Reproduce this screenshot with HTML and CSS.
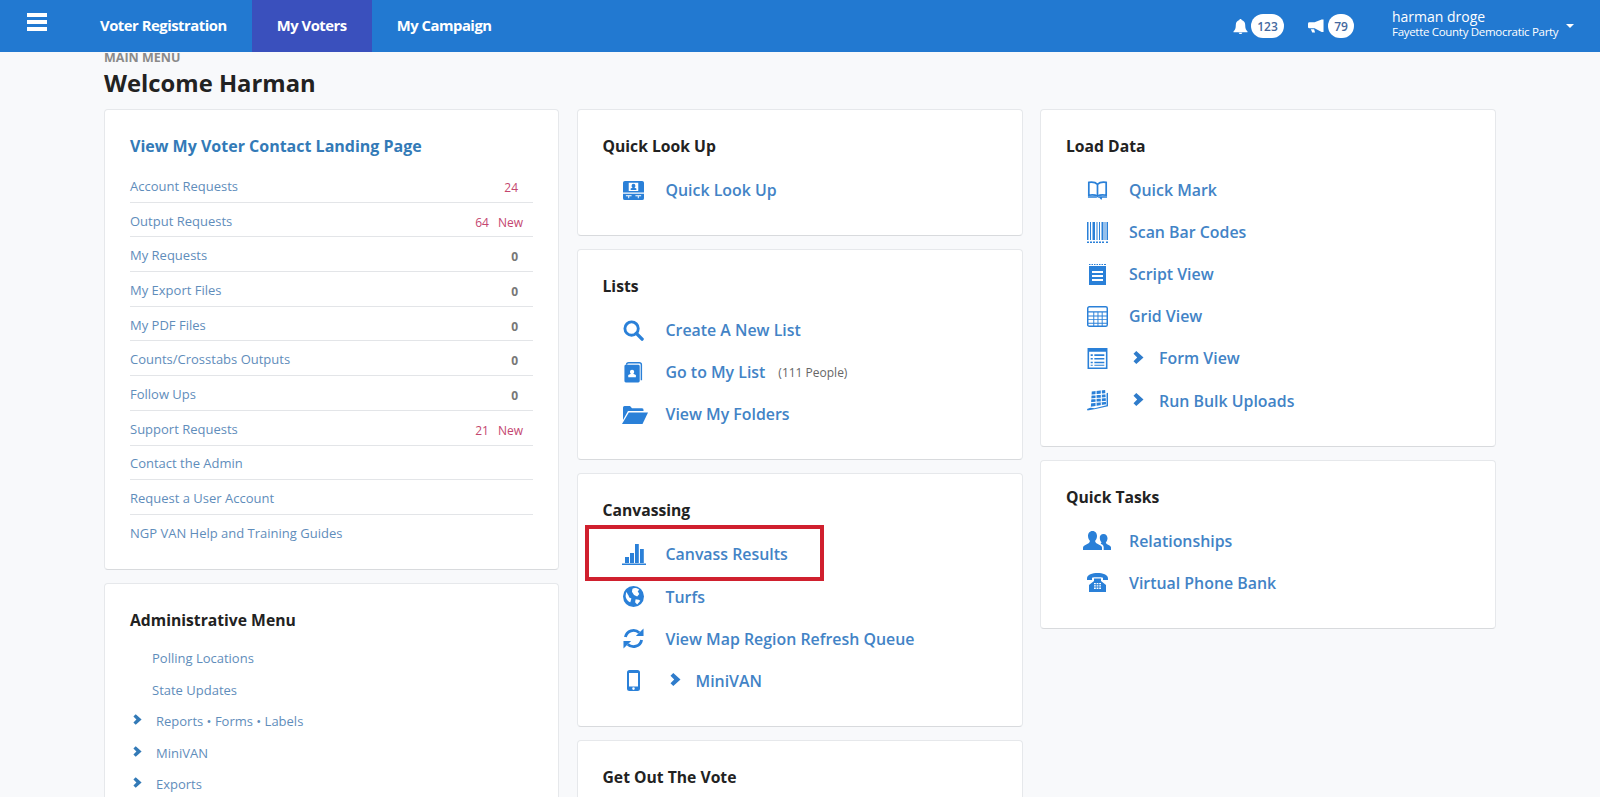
FILE: index.html
```html
<!DOCTYPE html>
<html lang="en">
<head>
<meta charset="utf-8">
<title>Main Menu</title>
<link rel="stylesheet" href="styles.css">
</head>
<body>
<svg class="defs" aria-hidden="true">
  <symbol id="chev" viewBox="0 0 11 13"><path d="M3.300 0 10.500 6.500 3.300 13 .5 10.200 4.200 6.500 .5 2.800Z"/></symbol>
  <symbol id="lookup" viewBox="0 0 22 20"><path fill-rule="evenodd" d="M2 0h18a2 2 0 0 1 2 2v10H0V2a2 2 0 0 1 2-2ZM6 2v8.500h10V2ZM0 13.500h22V18a2 2 0 0 1-2 2H2a2 2 0 0 1-2-2Z"/><path d="M11 3a2 2 0 0 1 2 2c0 1-.5 1.700-1 2l2 1v1.500H8V8l2-1c-.5-.3-1-1-1-2a2 2 0 0 1 2-2Z"/><path fill="#fff" d="M3 15h6v1H6.500v2h-1v-2H3ZM13 15h6v1h-2.500v2h-1v-2H13Z"/></symbol>
  <symbol id="search" viewBox="0 0 22 22"><circle cx="9" cy="9" r="7" fill="none" stroke="currentColor" stroke-width="3"/><path d="M14 14l6 6" fill="none" stroke="currentColor" stroke-width="3.600" stroke-linecap="round"/></symbol>
  <symbol id="mylist" viewBox="0 0 20 22"><path d="M2 3a3 3 0 0 1 3-3h11a3 3 0 0 1 3 3v16h-1.500V3A1.500 1.500 0 0 0 16 1.500H5A1.500 1.500 0 0 0 3.500 3Z"/><path fill-rule="evenodd" d="M2 3h13a1.500 1.500 0 0 1 1.500 1.500V20a1.500 1.500 0 0 1-1.500 1.500H2a1.500 1.500 0 0 1-1.500-1.500V4.500A1.500 1.500 0 0 1 2 3Z"/><path fill="#fff" d="M8.500 8a2.200 2.200 0 0 1 2.200 2.300c0 1-.5 1.700-1 2l2.800 1.300V16H4.500v-2.400l2.800-1.300c-.5-.3-1-1-1-2A2.200 2.200 0 0 1 8.500 8Z"/></symbol>
  <symbol id="folder" viewBox="0 0 26 19"><path d="M1 2.500A1.500 1.500 0 0 1 2.500 1H8l2 2.300h10A1.500 1.500 0 0 1 21.500 5v1H6L1 15Z"/><path d="M6.800 7.500H26L20.500 19H0Z"/></symbol>
  <symbol id="bars" viewBox="0 0 24 21"><path d="M0 19.500h24V21H0ZM3 13h4v6H3ZM8 9h4v10H8ZM13 0h3.800v19H13ZM18 5h3.800v14H18Z"/></symbol>
  <symbol id="globe" viewBox="0 0 20 20"><circle cx="10" cy="10" r="10"/><path fill="#fff" d="M9 2.500c2-1 5-.5 6.500 1l-1.500 1.500 1.500 2.500-2 2.500-3-1.500-2-3ZM3 6c1 0 1 2 2 2.500l1 2.500 2 1-1 3.500C5 15 2.500 12 2.500 9.500ZM12 12.500l3 .5 1.500 1-3 3.500-2-2Z"/></symbol>
  <symbol id="refresh" viewBox="0 0 22 22"><g fill="none" stroke="currentColor" stroke-width="3"><path d="M2.500 9.500A8.600 8.600 0 0 1 17 5"/><path d="M19.500 12.500A8.600 8.600 0 0 1 5 17"/></g><path d="M21.500 .5v8h-8ZM.5 21.500v-8h8Z"/></symbol>
  <symbol id="mobile" viewBox="0 0 13 21"><path fill-rule="evenodd" d="M2.500 0h8A2.500 2.500 0 0 1 13 2.500v16a2.500 2.500 0 0 1-2.500 2.500h-8A2.500 2.500 0 0 1 0 18.500v-16A2.500 2.500 0 0 1 2.500 0ZM2 3v13.500h9V3ZM6.500 17.300a1.300 1.300 0 1 0 0 2.600 1.300 1.300 0 0 0 0-2.600Z"/></symbol>
  <symbol id="book" viewBox="0 0 22 20"><g fill="none" stroke="currentColor" stroke-width="1.800"><path d="M11 3.500C9 1.500 5 1 1.900 1.500v13.500c3-.5 7-.3 9.100 1 2.100-1.300 6.100-1.500 9.100-1V1.500C17 1 13 1.500 11 3.500ZM11 3.500V16"/></g><path d="M1 16h8l2 1.500L13 16h8v1.500h-5l-1 2.500-2-2.500H1Z"/></symbol>
  <symbol id="barcode" viewBox="0 0 21 21"><path d="M0 0h1.500v18H0ZM3 0h1v18H3ZM5.500 0h2.500v18H5.500ZM9.500 0h1v18h-1ZM12 0h1v18h-1ZM14.500 0h2v18h-2ZM17.500 0h1v18h-1ZM19.500 0h1.500v18h-1.500ZM0 19.500h2V21H0ZM3 19.500h2V21H3ZM6 19.500h2V21H6ZM9 19.500h2V21H9ZM12 19.500h2V21h-2ZM15 19.500h2V21h-2ZM19 19.500h2V21h-2Z"/></symbol>
  <symbol id="script" viewBox="0 0 17 21"><path fill-rule="evenodd" d="M0 2h17v19H0ZM3 7v2h11V7ZM3 11v2h11v-2ZM3 15v2h11v-2Z"/><path d="M0 0h1.500v1H0ZM2.500 0H4v1H2.500ZM5 0h1.500v1H5ZM7.500 0H9v1H7.500ZM10 0h1.500v1H10ZM12.500 0H14v1h-1.500ZM15 0h2v1h-2Z"/></symbol>
  <symbol id="grid" viewBox="0 0 20 20"><rect x=".7" y=".7" width="18.600" height="18.600" rx="1.500" fill="none" stroke="currentColor" stroke-width="1.400"/><path d="M1 5h18v1.200H1ZM1 9h18v.9H1ZM1 12.500h18v.9H1ZM1 16h18v.9H1ZM6 6h.9v13H6ZM10 6h.9v13H10ZM14 6h.9v13H14Z"/></symbol>
  <symbol id="form" viewBox="0 0 19 20"><path fill-rule="evenodd" d="M0 0h19v20H0ZM1.500 3.500V18.500h16V3.500Z"/><path d="M3 6h2v1.500H3ZM6.500 6H16v1.500H6.500ZM3 9.500h2V11H3ZM6.500 9.500H16V11H6.500ZM3 13h2v1.500H3ZM6.500 13H16v1.500H6.500ZM3 16h2v1H3ZM6.500 16H16v1H6.500Z"/></symbol>
  <symbol id="bulk" viewBox="0 0 22 22"><path d="M5 1.500 19 0 20 15 4 17.500Z"/><path fill="none" stroke="#fff" stroke-width="1.100" d="M3 5.500 21 3.800M3 9.500 21 7.800M3 13.500 21 11.800M9.500 0V18M15 0V18"/><path d="M20.500 3.500 22 3V17L9 20 .5 21.500 0 19.800 3.500 18.500 8 19 20.500 16Z"/></symbol>
  <symbol id="people" viewBox="0 0 28 19"><path d="M9.500 0C12.500 0 14 2.500 14 5c0 2.300-1 4-2 5l1 2 4.500 2.500c1 .5 1.500 1.300 1.500 2.500v2H0v-2c0-1.200.5-2 1.500-2.500L6 12l1-2c-1-1-2-2.700-2-5 0-2.500 1.500-5 4.500-5Z"/><path d="M20.500 3c2.500 0 4 2 4 4.300 0 1.900-.9 3.300-1.700 4.200l.8 1.500 2.900 1.500c.9.500 1.500 1.200 1.500 2.100V19h-7.300v-2.500c0-1.500-.7-2.600-2-3.300l-1-.5.800-1.500c-.9-.9-1.700-2.300-1.700-4.200C16.500 5 18 3 20.500 3Z"/></symbol>
  <symbol id="phone" viewBox="0 0 21 19"><path d="M10.500 0C15.500 0 21 1.500 21 5.500V7h-5V4.800c-1.500-.6-9.500-.6-11 0V7H0V5.500C0 1.500 5.500 0 10.500 0Z"/><path fill-rule="evenodd" d="M7 5.500h7V8l5 4v7H2v-7l5-4ZM7 10v1.300h1.800V10ZM9.600 10v1.300h1.800V10ZM12.200 10v1.300H14V10ZM7 12.300v1.300h1.800v-1.300ZM9.600 12.300v1.300h1.800v-1.300ZM12.200 12.300v1.300H14v-1.300ZM7 14.600v1.300h1.800v-1.300ZM9.600 14.600v1.300h1.800v-1.300ZM12.200 14.600v1.300H14v-1.300Z"/></symbol>
  <symbol id="bell" viewBox="0 0 16 16"><path d="M8 0c.8 0 1.200.5 1.200 1.100C11.500 1.700 13 3.600 13 6c0 4 .8 5.500 2.500 7.200V14H.5v-.8C2.200 11.500 3 10 3 6c0-2.400 1.500-4.300 3.800-4.900C6.800.5 7.200 0 8 0ZM6 14.700h4A2 2 0 0 1 8 16a2 2 0 0 1-2-1.300Z"/></symbol>
  <symbol id="horn" viewBox="0 0 17 14"><path d="M14.500 0H16.500V13.500H14.500L7 9.500H1.500A1.500 1.500 0 0 1 0 8V4.500A1.500 1.500 0 0 1 1.500 3H7ZM3 10.500h3.500l1 3.500H4.500Z"/></symbol>
</svg>

<header class="topbar">
  <button class="burger" aria-label="Menu"><span></span><span></span><span></span></button>
  <nav class="tabs">
    <a class="tab">Voter Registration</a>
    <a class="tab tab-on">My Voters</a>
    <a class="tab">My Campaign</a>
  </nav>
  <div class="tools">
    <svg class="ic-bell"><use href="#bell"/></svg><span class="pill pill-a">123</span>
    <svg class="ic-horn"><use href="#horn"/></svg><span class="pill pill-b">79</span>
  </div>
  <div class="user">
    <div class="user-name">harman droge</div>
    <div class="user-org">Fayette County Democratic Party</div>
  </div>
  <span class="caret"></span>
</header>

<main class="page">
  <div class="crumb">MAIN MENU</div>
  <h1 class="welcome">Welcome Harman</h1>
  <div class="cols">
    <div class="col">
      <section class="card card-main">
        <h2 class="title title-link">View My Voter Contact Landing Page</h2>
        <ul class="stats">
          <li><a>Account Requests</a><span class="num hot">24</span></li>
          <li><a>Output Requests</a><span class="num hot has-new">64</span><span class="new">New</span></li>
          <li><a>My Requests</a><span class="num">0</span></li>
          <li><a>My Export Files</a><span class="num">0</span></li>
          <li><a>My PDF Files</a><span class="num">0</span></li>
          <li><a>Counts/Crosstabs Outputs</a><span class="num">0</span></li>
          <li><a>Follow Ups</a><span class="num">0</span></li>
          <li><a>Support Requests</a><span class="num hot has-new">21</span><span class="new">New</span></li>
          <li><a>Contact the Admin</a></li>
          <li><a>Request a User Account</a></li>
          <li class="last"><a>NGP VAN Help and Training Guides</a></li>
        </ul>
      </section>
      <section class="card">
        <h2 class="title">Administrative Menu</h2>
        <ul class="admin">
          <li class="plain"><a>Polling Locations</a></li>
          <li class="plain"><a>State Updates</a></li>
          <li><svg class="chev-s"><use href="#chev"/></svg><a>Reports • Forms • Labels</a></li>
          <li><svg class="chev-s"><use href="#chev"/></svg><a>MiniVAN</a></li>
          <li><svg class="chev-s"><use href="#chev"/></svg><a>Exports</a></li>
        </ul>
      </section>
    </div>
    <div class="col">
      <section class="card">
        <h2 class="title">Quick Look Up</h2>
        <div class="link"><span class="ic"><svg class="i21"><use href="#lookup"/></svg></span><a>Quick Look Up</a></div>
      </section>
      <section class="card">
        <h2 class="title">Lists</h2>
        <div class="link"><span class="ic"><svg class="i21"><use href="#search"/></svg></span><a>Create A New List</a></div>
        <div class="link"><span class="ic"><svg class="i21"><use href="#mylist"/></svg></span><a>Go to My List</a><span class="note">(111 People)</span></div>
        <div class="link"><span class="ic"><svg class="i26"><use href="#folder"/></svg></span><a>View My Folders</a></div>
      </section>
      <section class="card card-mark">
        <h2 class="title">Canvassing</h2>
        <div class="link"><span class="ic"><svg class="i23"><use href="#bars"/></svg></span><a>Canvass Results</a></div>
        <div class="link"><span class="ic"><svg class="i21"><use href="#globe"/></svg></span><a>Turfs</a></div>
        <div class="link"><span class="ic"><svg class="i21"><use href="#refresh"/></svg></span><a>View Map Region Refresh Queue</a></div>
        <div class="link"><span class="ic"><svg class="i21"><use href="#mobile"/></svg></span><svg class="chev"><use href="#chev"/></svg><a>MiniVAN</a></div>
        <div class="mark"></div>
      </section>
      <section class="card">
        <h2 class="title">Get Out The Vote</h2>
      </section>
    </div>
    <div class="col">
      <section class="card">
        <h2 class="title">Load Data</h2>
        <div class="link"><span class="ic"><svg class="i21"><use href="#book"/></svg></span><a>Quick Mark</a></div>
        <div class="link"><span class="ic"><svg class="i21"><use href="#barcode"/></svg></span><a>Scan Bar Codes</a></div>
        <div class="link"><span class="ic"><svg class="i21"><use href="#script"/></svg></span><a>Script View</a></div>
        <div class="link"><span class="ic"><svg class="i21"><use href="#grid"/></svg></span><a>Grid View</a></div>
        <div class="link"><span class="ic"><svg class="i21"><use href="#form"/></svg></span><svg class="chev"><use href="#chev"/></svg><a>Form View</a></div>
        <div class="link"><span class="ic"><svg class="i21"><use href="#bulk"/></svg></span><svg class="chev"><use href="#chev"/></svg><a>Run Bulk Uploads</a></div>
      </section>
      <section class="card">
        <h2 class="title">Quick Tasks</h2>
        <div class="link"><span class="ic"><svg class="i28"><use href="#people"/></svg></span><a>Relationships</a></div>
        <div class="link"><span class="ic"><svg class="i21"><use href="#phone"/></svg></span><a>Virtual Phone Bank</a></div>
      </section>
    </div>
  </div>
</main>
</body>
</html>
```

FILE: styles.css
```css
* { box-sizing: border-box; }
html, body { margin: 0; height: 797px; overflow: hidden; }
body { background: #f8f9fb; font-family: "Open Sans", "Noto Sans", sans-serif; color: #222; }
.defs { display: none; }
a { color: inherit; text-decoration: none; }
ul { list-style: none; margin: 0; padding: 0; }

.topbar { height: 52px; background: #2279d1; color: #fff; display: flex; align-items: stretch; }
.burger { width: 20px; height: 18px; margin: 13px 0 0 27px; padding: 0; border: 0; background: none; display: flex; flex-direction: column; justify-content: space-between; }
.burger span { display: block; height: 4px; background: #fff; }
.tabs { display: flex; margin-left: 28px; }
.tab { display: flex; align-items: center; padding: 0 25px 3px; font-size: 14.800px; font-weight: 700; letter-spacing: -.47px; }
.tab-on { background: #3a50bd; }
.tools { margin-left: auto; display: flex; align-items: center; }
.ic-bell { width: 15px; height: 15px; fill: #fff; margin-right: 3px; }
.ic-horn { width: 16px; height: 14px; fill: #fff; margin: 0 4px 0 24px; }
.pill { height: 24px; border-radius: 12px; background: #fff; color: #44689e; font-size: 12px; font-weight: 600; display: flex; align-items: center; justify-content: center; }
.pill-a { width: 33px; }
.pill-b { width: 26px; }
.user { margin-left: 38px; padding-top: 7px; width: 174px; }
.user-name { font-size: 14px; line-height: 20px; }
.user-org { margin-top: -2px; font-size: 11.500px; line-height: 14px; letter-spacing: -.3px; white-space: nowrap; }
.caret { width: 0; height: 0; margin: 24px 26px 0 0; border: 4px solid transparent; border-top-color: #fff; border-bottom: 0; }

.page { padding: 0 104px; }
.crumb { margin-top: -2px; font-size: 12.500px; line-height: 16px; font-weight: 700; color: #8a8a8a; }
.welcome { margin: 0 0 9px; font-size: 23.800px; line-height: 34px; font-weight: 700; color: #222; }
.cols { display: grid; grid-template-columns: 455px 446px 456px; column-gap: 17.500px; }
.col { display: flex; flex-direction: column; gap: 13px; }

.card { position: relative; background: #fff; border: 1px solid #e6e8eb; border-bottom-color: #d8dadd; border-radius: 4px; padding: 25px 25px 24px; }
.card-main { padding-bottom: 19px; }
.title { margin: 0 0 12px; font-size: 15.700px; line-height: 22px; font-weight: 700; color: #222; }
.title-link { color: #337ab7; margin-bottom: 11px; font-size: 16px; }

.stats li { height: 34.700px; display: flex; align-items: center; border-bottom: 1px solid #e3e5e8; font-size: 13px; color: #5f8dbb; }
.stats a { padding-top: 2px; }
.stats li.last { border-bottom: 0; }
.num { margin-left: auto; margin-right: 15px; padding-top: 5px; font-size: 12px; font-weight: 700; color: #777; }
.num.hot { font-weight: 400; color: #c4466f; }
.num.has-new { margin-right: 9px; }
.new { margin-right: 10px; padding-top: 5px; font-size: 12px; color: #c4466f; }

.admin li { height: 31.500px; display: flex; align-items: center; gap: 14px; padding-left: 3px; font-size: 13px; color: #5f8dbb; }
.admin li.plain { padding-left: 22px; }
.chev-s { width: 9px; height: 11px; fill: #337ab7; margin-top: -3px; }

.link { height: 42.100px; display: flex; align-items: center; font-size: 15.900px; font-weight: 600; color: #4283c6; }
.ic { width: 63px; flex: none; display: flex; justify-content: center; padding-right: 1px; color: #2a80d8; }
.ic svg { fill: #2a80d8; }
.i21 { width: 21px; height: 21px; }
.i23 { width: 24px; height: 21px; }
.i26 { width: 26px; height: 19px; margin-left: 3px; }
.i28 { width: 28px; height: 19px; }
.chev { width: 11px; height: 13px; fill: #2f7ccb; margin: -2px 15px 0 4px; flex: none; }
.note { margin-left: 13px; font-size: 12px; font-weight: 400; color: #666; }
.mark { position: absolute; left: 7px; top: 51px; width: 239px; height: 56px; border: 4px solid #d0202e; }
```
